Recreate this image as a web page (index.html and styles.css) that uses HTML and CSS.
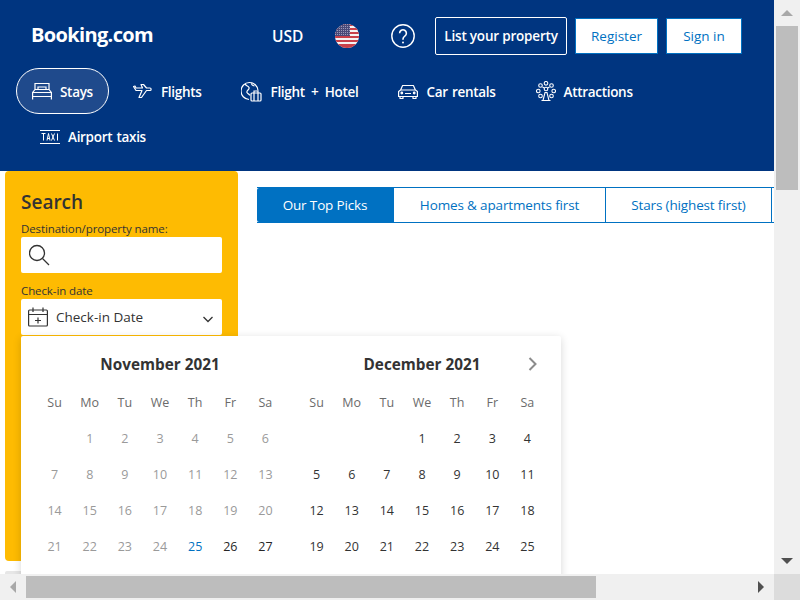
FILE: index.html
```html
<!DOCTYPE html>
<html>
<head>
  <meta charset="UTF-8">
  <title>Booking.com</title>
  <link rel="stylesheet" href="styles.css">
</head>
<body>
  <div class="window">
    <div class="page">
      <header class="header">
        <div class="top-bar">
          <div class="logo">Booking.com</div>
          <div class="currency">USD</div>
          <svg class="flag" width="24" height="24" viewBox="0 0 24 24">
            <defs>
              <clipPath id="flag-clip"><circle cx="12" cy="12" r="12"/></clipPath>
              <pattern id="flag-stars" width="2" height="2" patternUnits="userSpaceOnUse">
                <rect width="2" height="2" fill="#4a4a78"/>
                <rect width="1" height="1" fill="#9a9ab8"/>
              </pattern>
            </defs>
            <g clip-path="url(#flag-clip)">
              <rect width="24" height="24" fill="#f6f2f2"/>
              <rect y="0" width="24" height="2" fill="#c8404a"/>
              <rect y="4" width="24" height="2" fill="#c8404a"/>
              <rect y="8" width="24" height="2" fill="#c8404a"/>
              <rect y="12" width="24" height="2" fill="#c8404a"/>
              <rect y="16" width="24" height="2" fill="#c8404a"/>
              <rect y="20" width="24" height="4" fill="#c8404a"/>
              <rect width="15" height="12" fill="url(#flag-stars)"/>
            </g>
          </svg>
          <svg class="help" width="24" height="24" viewBox="0 0 24 24" fill="none" stroke="#fff" stroke-width="1.4">
            <circle cx="12" cy="12" r="11.2"/>
            <path d="M8.6 9.2a3.4 3.4 0 1 1 5.2 2.9c-1.2.8-1.800 1.400-1.800 3v.6" stroke-width="1.6"/>
            <circle cx="12" cy="18.6" r="1" fill="#fff" stroke="none"/>
          </svg>
          <a class="btn btn-outline">List your property</a>
          <a class="btn btn-light">Register</a>
          <a class="btn btn-light">Sign in</a>
        </div>
        <nav class="nav">
          <a class="nav-item active">
            <svg width="20" height="20" viewBox="0 0 20 20" fill="none" stroke="#fff" stroke-width="1.2">
              <path d="M.6 18.500v-7l2.400-3h14l2.400 3v7M.6 11.500h18.800M.6 15.500h18.800M3 8.500V2.500h14v6M6 8.500v-2.500h8v2.500"/>
            </svg>
            <span class="nav-label">Stays</span>
          </a>
          <a class="nav-item">
            <svg width="20" height="20" viewBox="0 0 20 20" fill="none" stroke="#fff" stroke-width="1.2" stroke-linejoin="round">
              <path d="M.5 5.500l2.500 4h6l-3 7h2.500l5-7h3.500c1.500 0 1.500-2.500 0-2.500h-3.500l-3-3.500h-2.500l1.500 3.500h-6.500l-1-2z"/>
            </svg>
            <span class="nav-label">Flights</span>
          </a>
          <a class="nav-item nav-item-wide">
            <svg width="21" height="21" viewBox="0 0 21 21" fill="none" stroke="#fff" stroke-width="1.2">
              <path d="M8 18.500a8.500 8.500 0 1 1 9-9M4 2.500c1 3 3 2 4 4s-3 3-2 5 3 1.500 2.500 3M11 1.500c-1 2 .5 3 2.500 3.500"/>
              <rect x="10" y="12" width="10" height="8" rx="1"/>
              <path d="M13 12v-2h4v2M13 12v8M17 12v8"/>
            </svg>
            <span class="nav-label">Flight + Hotel</span>
          </a>
          <a class="nav-item">
            <svg width="20" height="20" viewBox="0 0 20 20" fill="none" stroke="#fff" stroke-width="1.2" stroke-linejoin="round">
              <path d="M.6 10.500l2-1.500 2-4.500h10.800l2 4.500 2 1.500v5h-18.800zM2.600 9h14.800M2 15.500v2h3v-2M15 15.500v2h3v-2M7 12.500h6"/>
              <circle cx="3.800" cy="12" r=".8" fill="#fff"/>
              <circle cx="16.200" cy="12" r=".8" fill="#fff"/>
            </svg>
            <span class="nav-label">Car rentals</span>
          </a>
          <a class="nav-item">
            <svg width="20" height="20" viewBox="0 0 20 20" fill="none" stroke="#fff" stroke-width="1.100">
              <circle cx="10" cy="2.300" r="1.800"/>
              <circle cx="4.500" cy="4.500" r="1.800"/>
              <circle cx="15.500" cy="4.500" r="1.800"/>
              <circle cx="2.300" cy="10" r="1.800"/>
              <circle cx="17.700" cy="10" r="1.800"/>
              <circle cx="4.500" cy="15" r="1.800"/>
              <circle cx="15.500" cy="15" r="1.800"/>
              <circle cx="10" cy="8" r="1.800"/>
              <path d="M7 19.500l2-8h2l2 8zM5.500 19.500h9M6.500 6l1.800 1M13.500 6l-1.800 1"/>
            </svg>
            <span class="nav-label">Attractions</span>
          </a>
          <a class="nav-item">
            <svg width="20" height="16" viewBox="0 0 20 16" fill="none" stroke="#fff" stroke-width="1">
              <path d="M0 1.500h20M0 14.500h20"/>
              <path d="M1.500 4.500h4M3.500 4.500v7M7 11.500l1.500-7 1.500 7M7.500 9.500h2M11.500 4.500l3 7M14.500 4.500l-3 7M17.500 4.500v7"/>
            </svg>
            <span class="nav-label nav-label-last">Airport taxis</span>
          </a>
        </nav>
      </header>

      <main class="content">
        <div class="side">
          <aside class="sidebar">
            <h2 class="sidebar-title">Search</h2>
            <label class="field-label">Destination/property name:</label>
            <div class="field">
              <svg width="22" height="22" viewBox="0 0 22 22" fill="none" stroke="#333" stroke-width="1.300">
                <circle cx="8" cy="9" r="7.500"/>
                <path d="M13.500 14.500l6.500 6.500"/>
              </svg>
            </div>
            <label class="field-label field-label-date">Check-in date</label>
            <div class="field field-date">
              <svg width="20" height="20" viewBox="0 0 20 20" fill="none" stroke="#333" stroke-width="1.200">
                <rect x=".6" y="3" width="18.800" height="16" rx="1"/>
                <path d="M.6 7.500h18.800M5 .5v4.500M15 .5v4.500M10 10.500v6M7 13.500h6"/>
              </svg>
              <span class="field-text">Check-in Date</span>
              <svg class="chevron" width="12" height="12" viewBox="0 0 12 12" fill="none" stroke="#333" stroke-width="1.300">
                <path d="M1.500 4l4.500 4.500 4.500-4.500"/>
              </svg>
            </div>
          </aside>
          <div class="side-card"></div>
        </div>

        <section class="results">
          <div class="tabs">
            <a class="tab selected">Our Top Picks</a>
            <a class="tab">Homes &amp; apartments first</a>
            <a class="tab">Stars (highest first)</a>
            <a class="tab tab-cut"></a>
          </div>
        </section>

        <div class="calendar">
          <svg class="next" width="10" height="14" viewBox="0 0 10 14" fill="none" stroke="#8c8c8c" stroke-width="2">
            <path d="M1.500 1l6 6-6 6"/>
          </svg>
          <div class="month">
            <div class="month-title">November 2021</div>
            <div class="days past" id="november"></div>
          </div>
          <div class="month">
            <div class="month-title">December 2021</div>
            <div class="days" id="december"></div>
          </div>
        </div>
      </main>
    </div>

    <div class="vbar">
      <span class="arrow arrow-up"></span>
      <div class="vthumb"></div>
      <span class="vspace"></span>
      <span class="arrow arrow-down"></span>
    </div>
    <div class="hbar">
      <span class="arrow arrow-left"></span>
      <div class="hthumb"></div>
      <span class="hspace"></span>
      <span class="arrow arrow-right"></span>
    </div>
    <div class="corner"></div>
  </div>

  <script>
    const weekdays = ['Su', 'Mo', 'Tu', 'We', 'Th', 'Fr', 'Sa'];

    function fillMonth(id, blanks, length, firstActive) {
      const box = document.getElementById(id);
      weekdays.forEach(name => addCell(box, name, 'weekday'));
      for (let i = 0; i < blanks; i++) addCell(box, '', '');
      for (let day = 1; day <= length; day++) {
        let cls = '';
        if (day === firstActive) cls = 'today';
        if (day > firstActive) cls = 'open';
        addCell(box, day, cls);
      }
    }

    function addCell(box, text, cls) {
      const cell = document.createElement('div');
      cell.className = ('cell ' + cls).trim();
      cell.textContent = text;
      box.appendChild(cell);
    }

    fillMonth('november', 1, 27, 25);
    fillMonth('december', 3, 25, 0);
  </script>
</body>
</html>
```

FILE: styles.css
```css
* {
  box-sizing: border-box;
}

html, body {
  margin: 0;
  height: 100%;
  overflow: hidden;
}

body {
  font-family: "Open Sans", "Noto Sans", sans-serif;
  font-size: 14px;
  color: #333;
  background-color: #fff;
}

.window {
  display: grid;
  grid-template-columns: 774px 26px;
  grid-template-rows: 574px 26px;
  width: 800px;
  height: 600px;
}

.page {
  overflow: hidden;
  display: flex;
  flex-direction: column;
}

/* header */

.header {
  flex: none;
  height: 171px;
  background-color: #003580;
  color: #fff;
}

.top-bar {
  display: flex;
  align-items: center;
  height: 68px;
  padding: 4px 0 0 31px;
}

.logo {
  width: 241px;
  font-size: 20px;
  font-weight: 700;
  letter-spacing: -0.65px;
  margin-top: -3px;
}

.currency {
  width: 63px;
  font-size: 15.500px;
  font-weight: 600;
}

.flag {
  margin-right: 32px;
}

.help {
  margin-right: 20px;
}

.btn {
  display: flex;
  align-items: center;
  justify-content: center;
  height: 36px;
  font-size: 13.5px;
  border: 1px solid #0071c2;
}

.btn-outline {
  width: 132px;
  height: 38px;
  margin-right: 8px;
  font-weight: 600;
  letter-spacing: -0.2px;
  border-color: #fff;
  border-radius: 2px;
}

.btn-light {
  width: 83px;
  margin-right: 8px;
  background-color: #fff;
  color: #0071c2;
}

.btn-light:last-child {
  width: 76px;
}

.nav {
  display: flex;
  flex-wrap: wrap;
  padding-left: 24px;
}

.nav-item {
  display: flex;
  align-items: center;
  gap: 8px;
  height: 46px;
  padding: 0 15px;
  margin-right: 8px;
  font-size: 13.5px;
  font-weight: 600;
  letter-spacing: -0.3px;
  word-spacing: 1px;
  border: 1px solid transparent;
  border-radius: 23px;
}

.nav-item-wide {
  word-spacing: 3px;
}

.nav-label {
  padding-top: 2px;
}

.nav-label-last {
  padding-top: 0;
}

.nav-item.active {
  margin-left: -8px;
  background-color: #1f4a8c;
  border-color: #fff;
}

/* search sidebar */

.content {
  position: relative;
  flex: 1;
  display: flex;
  align-items: flex-start;
}

.side {
  flex: none;
  width: 233px;
  margin-left: 5px;
}

.sidebar {
  height: 390px;
  padding: 16px;
  background-color: #febb02;
  border-radius: 4px;
}

.side-card {
  height: 40px;
  margin-top: 10px;
  background-color: #e6e6e6;
  border-radius: 2px;
}

.sidebar-title {
  margin: 0;
  font-size: 19px;
  font-weight: 600;
  line-height: 30px;
}

.field-label {
  display: block;
  margin-top: 4px;
  font-size: 11.5px;
  letter-spacing: -0.1px;
  line-height: 16px;
}

.field-label-date {
  margin-top: 10px;
}

.field {
  display: flex;
  align-items: center;
  height: 36px;
  padding: 0 8px;
  background-color: #fff;
  border-radius: 2px;
}

.field-date {
  gap: 8px;
  padding-left: 7px;
}

.field-text {
  flex: 1;
  font-size: 13.5px;
}

.chevron {
  margin-top: 3px;
}

/* sort tabs */

.results {
  flex: 1;
  padding: 16px 0 0 19px;
  white-space: nowrap;
}

.tabs {
  display: flex;
  height: 36px;
  border-top: 1px solid #0071c2;
  border-bottom: 1px solid #0071c2;
}

.tab {
  display: flex;
  align-items: center;
  justify-content: center;
  color: #0071c2;
  font-size: 13.5px;
  letter-spacing: -0.15px;
  width: 212px;
  border-right: 1px solid #0071c2;
}

.tab.selected {
  width: 137px;
  background-color: #0071c2;
  color: #fff;
  border-radius: 2px 0 0 2px;
}

.tab:nth-child(3) {
  width: 166px;
}

.tab-cut {
  flex: 1;
  border-right: 0;
}

/* calendar popup */

.calendar {
  position: absolute;
  left: 21px;
  top: 165px;
  display: flex;
  gap: 16px;
  width: 540px;
  height: 260px;
  padding: 16px;
  background-color: #fff;
  border-radius: 2px;
  box-shadow: 0 2px 8px rgba(0, 0, 0, 0.16);
}

.next {
  position: absolute;
  right: 23px;
  top: 21px;
}

.month {
  width: 246px;
}

.month-title {
  height: 32px;
  font-size: 15.300px;
  font-weight: 700;
  line-height: 24px;
  text-align: center;
}

.days {
  display: grid;
  grid-template-columns: repeat(7, 1fr);
  grid-auto-rows: 36px;
}

.cell {
  display: flex;
  align-items: center;
  justify-content: center;
  font-size: 12.500px;
  color: #333;
}

.cell.weekday {
  color: #6b6b6b;
}

.past .cell {
  color: #9a9a9a;
}

.past .cell.weekday {
  color: #6b6b6b;
}

.past .cell.today {
  color: #0071c2;
}

.past .cell.open {
  color: #262626;
}

/* scrollbars */

.vbar {
  grid-column: 2;
  grid-row: 1;
  display: flex;
  flex-direction: column;
  align-items: center;
  padding: 0 2px;
  background-color: #f0f0f0;
}

.hbar {
  grid-column: 1;
  grid-row: 2;
  display: flex;
  align-items: center;
  padding: 2px 0;
  background-color: #f0f0f0;
}

.corner {
  grid-column: 2;
  grid-row: 2;
  background-color: #dcdcdc;
}

.vthumb {
  width: 22px;
  height: 164px;
  background-color: #bdbdbd;
}

.hthumb {
  width: 570px;
  height: 22px;
  background-color: #bdbdbd;
}

.vspace, .hspace {
  flex: 1;
}

.arrow {
  flex: none;
  width: 0;
  height: 0;
  border-style: solid;
  border-color: transparent;
}

.arrow-up {
  margin: 10px 0 10px;
  border-width: 0 6px 6px;
  border-bottom-color: #a8a8a8;
}

.arrow-down {
  margin: 10px 0;
  border-width: 6px 6px 0;
  border-top-color: #505050;
}

.arrow-left {
  margin: 0 10px;
  border-width: 6px 6px 6px 0;
  border-right-color: #a8a8a8;
}

.arrow-right {
  margin: 0 10px;
  border-width: 6px 0 6px 6px;
  border-left-color: #505050;
}
```
